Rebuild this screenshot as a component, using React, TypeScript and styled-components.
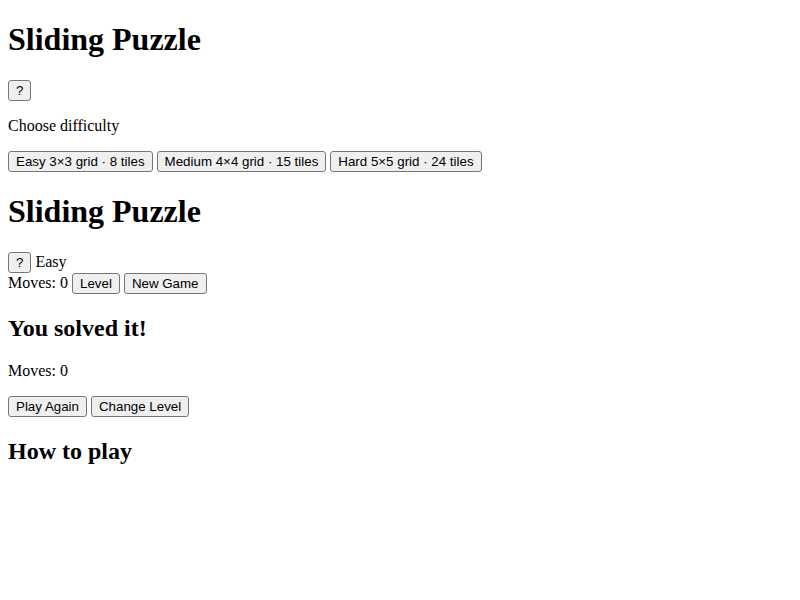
import React from "react";
import styled, { createGlobalStyle } from "styled-components";

const GlobalStyle = createGlobalStyle`
  html, body { background: #ffffff; }
  body {
    margin: 0 8px;
    padding: 0;
    font-family: "Liberation Serif", "Times New Roman", serif;
    font-size: 16px;
    color: #000000;
  }
`;

const Page = styled.main`
  display: block;
`;

const Title = styled.h1`
  font-size: 2em;
  font-weight: bold;
  margin: 0.67em 0;
`;

const SubTitle = styled.h2`
  font-size: 1.5em;
  font-weight: bold;
  line-height: 1.2;
  margin: 0.83em 0;
`;

const Para = styled.p`
  margin: 1em 0;
`;

const Row = styled.div``;

const Button = styled.button`
  font-family: "Liberation Sans", Arial, sans-serif;
  font-size: 13.333px;
  line-height: normal;
  color: #000000;
  background: #efefef;
  border: 1px solid #767676;
  border-radius: 3px;
  padding: 2px 7px;
  margin: 0;
  cursor: pointer;
`;

const levels = [
  { name: "Easy", grid: "3×3 grid", tiles: "8 tiles" },
  { name: "Medium", grid: "4×4 grid", tiles: "15 tiles" },
  { name: "Hard", grid: "5×5 grid", tiles: "24 tiles" },
];

export default function App() {
  return (
    <Page>
      <GlobalStyle />
      <section>
        <Title>Sliding Puzzle</Title>
        <Row>
          <Button>?</Button>
        </Row>
        <Para>Choose difficulty</Para>
        <Row>
          {levels.map((l, i) => (
            <React.Fragment key={l.name}>
              {i > 0 ? " " : null}
              <Button>
                {l.name} {l.grid} · {l.tiles}
              </Button>
            </React.Fragment>
          ))}
        </Row>
      </section>
      <section>
        <Title>Sliding Puzzle</Title>
        <Row>
          <Button>?</Button> <span>Easy</span>
        </Row>
        <Row>
          <span>Moves: 0</span> <Button>Level</Button>{" "}
          <Button>New Game</Button>
        </Row>
        <SubTitle>You solved it!</SubTitle>
        <Para>Moves: 0</Para>
        <Row>
          <Button>Play Again</Button> <Button>Change Level</Button>
        </Row>
        <SubTitle>How to play</SubTitle>
      </section>
    </Page>
  );
}
